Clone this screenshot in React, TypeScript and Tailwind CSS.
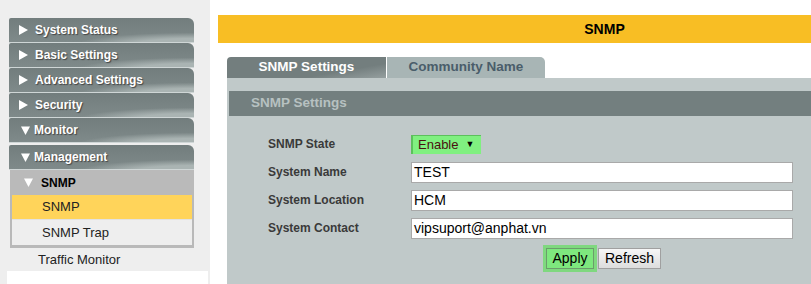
const menu = [
  { label: "System Status", open: false },
  { label: "Basic Settings", open: false },
  { label: "Advanced Settings", open: false },
  { label: "Security", open: false },
  { label: "Monitor", open: true },
];

function Arrow({ open }: { open: boolean }) {
  return open ? (
    <svg width="9" height="9" viewBox="0 0 9 9" className="fill-white">
      <path d="M0 0.5h9L4.5 9z" />
    </svg>
  ) : (
    <svg width="9" height="10" viewBox="0 0 9 10" className="fill-white">
      <path d="M0 0l9 5-9 5z" />
    </svg>
  );
}

function MenuItem({ label, open }: { label: string; open: boolean }) {
  return (
    <div
      className={
        "h-[25px] flex items-center rounded-tr-[6px] rounded-tl-[2px] border-b border-[#cfd6d6] bg-[radial-gradient(ellipse_90%_70%_at_100%_110%,#aab4b3_0%,#aab4b3_35%,transparent_70%),linear-gradient(#727d7d,#7f8a8a)] text-white font-bold text-[12px] [text-shadow:1px_1px_1px_#444] " +
        (open ? "pl-[12px] gap-[4px]" : "pl-[10px] gap-[7px]")
      }
    >
      <Arrow open={open} />
      <span>{label}</span>
    </div>
  );
}

function Field({ label, children }: { label: string; children: React.ReactNode }) {
  return (
    <>
      <div className="h-[28px] flex items-center text-[12px] font-bold text-[#3a3a3a]">{label}</div>
      <div className="h-[28px] flex items-center">{children}</div>
    </>
  );
}

export default function App() {
  return (
    <div className="w-[811px] h-[284px] overflow-hidden flex bg-white font-['Liberation_Sans',Arial,sans-serif]">
      <div className="w-[210px] flex-none bg-[#eeeeee] pt-[18px] flex flex-col">
        <div className="pl-[9px] w-[194px] flex flex-col">
          {menu.map((m) => (
            <MenuItem key={m.label} label={m.label} open={m.open} />
          ))}
          <div className="h-[2px]" />
          <MenuItem label="Management" open />
          <div className="ml-[1px] h-[25px] flex items-center gap-[8px] pl-[14px] bg-[#bababa] text-[12px] font-bold text-black">
            <Arrow open />
            <span>SNMP</span>
          </div>
          <div className="ml-[1px] border-x-[2px] border-b-[3px] border-[#b9b9b9] flex flex-col text-[13px] text-[#222]">
            <div className="h-[25px] flex items-center pl-[30px] bg-[#ffd45a] border-b border-[#e2e2e2]">SNMP</div>
            <div className="h-[25px] flex items-center pl-[30px] bg-[#eeeeee]">SNMP Trap</div>
          </div>
          <div className="h-[23px] flex items-center pl-[29px] text-[13px] text-[#222]">Traffic Monitor</div>
        </div>
        <div className="ml-[7px] w-[201px] flex-1 bg-white" />
      </div>

      <div className="flex-none w-[781px] pl-[8px] pt-[15px]">
        <div className="h-[28px] bg-[#f8be24] flex items-center justify-center text-[14px] font-bold text-black">SNMP</div>
        <div className="mt-[14px] ml-[9px] flex">
          <div className="w-[159px] h-[21px] flex items-center justify-center rounded-tl-[4px] bg-[linear-gradient(170deg,#737e7e_0%,#737e7e_70%,#959f9f_100%)] text-white font-bold text-[13.5px]">
            SNMP Settings
          </div>
          <div className="ml-[1px] w-[158px] h-[21px] flex items-center justify-center rounded-tr-[5px] bg-[#a8b5b5] text-[#4a5d6a] font-bold text-[13.5px]">
            Community Name
          </div>
        </div>
        <div className="ml-[9px] h-[210px] bg-[#c0c9c9] pt-[13px] pl-[2px]">
          <div className="h-[25px] bg-[#737f7f] flex items-center pl-[22px] text-[13.5px] font-bold text-[#b7c1c1]">
            SNMP Settings
          </div>
          <div className="mt-[14px] ml-[39px] grid grid-cols-[143px_382px]">
            <Field label="SNMP State">
              <div className="h-[19px] w-[70px] flex items-center bg-[#80f080] border-l-[2px] border-t border-[#5cc05c] pl-[5px] text-[13px] text-[#4a1010]">
                Enable
                <span className="ml-[7px] text-[9px] text-black">▼</span>
              </div>
            </Field>
            <Field label="System Name">
              <div className="h-[21px] w-full bg-white border border-[#a9a9a9] flex items-center pl-[2px] text-[14px] text-black">TEST</div>
            </Field>
            <Field label="System Location">
              <div className="h-[21px] w-full bg-white border border-[#a9a9a9] flex items-center pl-[2px] text-[14px] text-black">HCM</div>
            </Field>
            <Field label="System Contact">
              <div className="h-[21px] w-full bg-white border border-[#a9a9a9] flex items-center pl-[2px] text-[14px] text-black">vipsuport@anphat.vn</div>
            </Field>
            <div />
            <div className="mt-[3px] flex justify-center items-center gap-[1px]">
              <div className="p-[3px] bg-[#7fd87f]">
                <div className="h-[21px] w-[48px] flex items-center justify-center bg-[#7ee87e] border border-[#6c9c6c] text-[14px] text-black">Apply</div>
              </div>
              <div className="h-[21px] w-[63px] flex items-center justify-center bg-[linear-gradient(#f6f6f6,#dddddd)] border border-[#a0a0a0] text-[14px] text-black">Refresh</div>
            </div>
          </div>
        </div>
      </div>
    </div>
  );
}
